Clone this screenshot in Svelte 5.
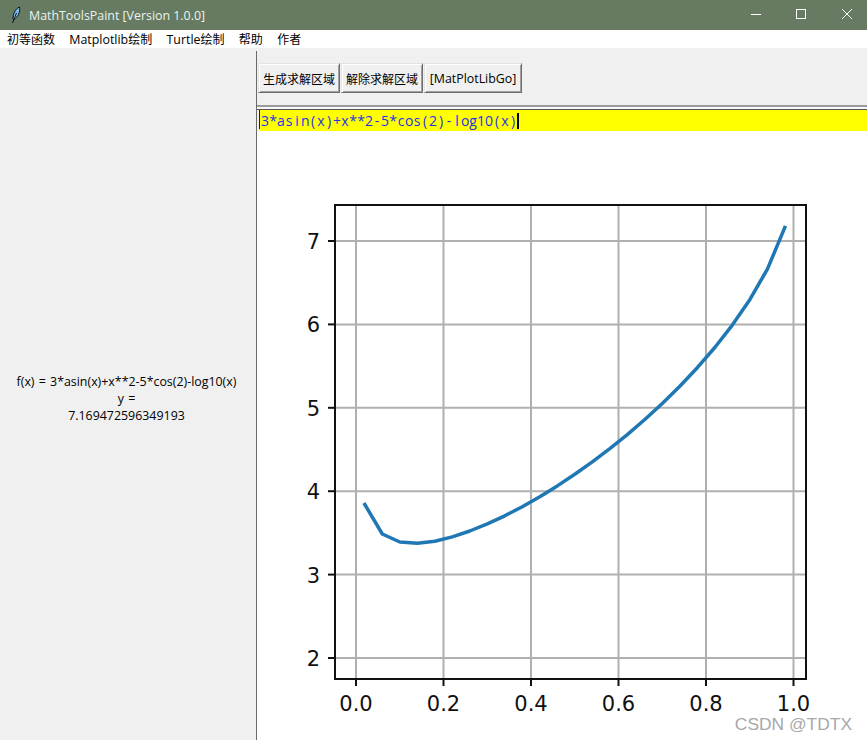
<script>
  const f = (x) => 3 * Math.asin(x) + x * x - 5 * Math.cos(2) - Math.log10(x);
  const px = (x) => 356 + x * 437.5;
  const py = (y) => 658 - (y - 2) * 83.4;
  const points = Array.from({ length: 25 }, (_, i) => {
    const x = 0.02 + i * 0.04;
    return `${px(x).toFixed(1)},${py(f(x)).toFixed(1)}`;
  }).join(' ');
  const xTicks = ['0.0', '0.2', '0.4', '0.6', '0.8', '1.0'];
  const yTicks = [2, 3, 4, 5, 6, 7];
  const menus = [['', '初等函数'], ['Matplotlib', '绘制'], ['Turtle', '绘制'], ['', '帮助'], ['', '作者']];
  const expr = '3*asin(x)+x**2-5*cos(2)-log10(x)';
</script>

<div class="window">
  <header class="titlebar">
    <svg class="feather" viewBox="0 0 10 18" width="10" height="18" aria-hidden="true">
      <path d="M2 13 C2 8 4 3 8.5 1 C9.5 6 7 11 3 13.5 Z" fill="#7db8ea" stroke="#0d1420" stroke-width="1"/>
      <path d="M1.5 17 L5.5 7" stroke="#0d1420" stroke-width="1" fill="none"/>
    </svg>
    <span class="title">MathToolsPaint [Version 1.0.0]</span>
    <div class="controls">
      <svg viewBox="0 0 46 30" width="46" height="30" aria-hidden="true"><path d="M19 14.5 H29" stroke="#fff" fill="none"/></svg>
      <svg viewBox="0 0 46 30" width="46" height="30" aria-hidden="true"><rect x="18.5" y="9.5" width="9" height="9" stroke="#fff" fill="none"/></svg>
      <svg viewBox="0 0 46 30" width="46" height="30" aria-hidden="true"><path d="M18 9 L28 19 M28 9 L18 19" stroke="#fff" fill="none"/></svg>
    </div>
  </header>

  <nav class="menubar">
    {#each menus as [latin, cjk]}
      <span class="menu">{#if latin}<span class="latin">{latin}</span>{/if}{cjk}</span>
    {/each}
  </nav>

  <div class="body">
    <aside class="side">
      <p>f(x) = 3*asin(x)+x**2-5*cos(2)-log10(x)</p>
      <p>y =</p>
      <p>7.169472596349193</p>
    </aside>
    <main class="main">
      <div class="toolbar">
        <button class="btn">生成求解区域</button>
        <button class="btn">解除求解区域</button>
        <button class="btn latin">[MatPlotLibGo]</button>
      </div>
      <div class="sep"></div>
      <div class="entry">
        {#each expr as ch}<span class="ch">{ch}</span>{/each}<i class="caret"></i>
      </div>
      <div class="canvas"></div>
    </main>
  </div>

  <svg class="plot" width="867" height="740" viewBox="0 0 867 740" aria-label="plot">
    <g class="grid">
      {#each xTicks as t, i}<line x1={px(i * 0.2)} x2={px(i * 0.2)} y1="205" y2="679"/>{/each}
      {#each yTicks as t}<line x1="335" x2="806" y1={py(t)} y2={py(t)}/>{/each}
    </g>
    <polyline class="curve" {points}/>
    <rect class="frame" x="335" y="205" width="471" height="474"/>
    <g class="ticks">
      {#each xTicks as t, i}
        <line x1={px(i * 0.2)} x2={px(i * 0.2)} y1="679" y2="686"/>
        <text x={px(i * 0.2)} y="711" text-anchor="middle">{t}</text>
      {/each}
      {#each yTicks as t}
        <line x1="328" x2="335" y1={py(t)} y2={py(t)}/>
        <text x="320" y={py(t) + 8} text-anchor="end">{t}</text>
      {/each}
    </g>
    <text class="mark" x="852" y="730" text-anchor="end">CSDN @TDTX</text>
  </svg>
</div>

<style>
  :global(body) { margin: 0; background: #fff; }
  .window {
    position: relative;
    width: 867px;
    height: 740px;
    overflow: hidden;
    display: flex;
    flex-direction: column;
    font-family: "Noto Sans CJK SC", "Liberation Sans", sans-serif;
    font-size: 12px;
    color: #000;
  }
  .titlebar {
    height: 30px;
    flex: none;
    background: #667b61;
    display: flex;
    align-items: center;
    color: #fff;
  }
  .feather { margin-left: 11px; }
  .title {
    margin-left: 8px;
    font-family: "Open Sans", "Liberation Sans", sans-serif;
    font-size: 12.4px;
    color: #eaf3f0;
  }
  .controls { margin-left: auto; display: flex; margin-right: -3px; }
  .menubar {
    height: 18px;
    flex: none;
    background: #fff;
    display: flex;
    align-items: center;
    padding-left: 7px;
    gap: 14.3px;
    font-family: "Noto Sans CJK SC", sans-serif;
    font-size: 12px;
    line-height: 18px;
  }
  .latin { font-family: "Open Sans", "Noto Sans CJK SC", sans-serif; font-size: 12.4px; }
  .body { flex: 1; display: flex; min-height: 0; background: #f0f0f0; }
  .side {
    width: 256px;
    flex: none;
    box-sizing: border-box;
    padding: 9px 3px 0 0;
    display: flex;
    flex-direction: column;
    align-items: center;
    justify-content: center;
    font-family: "Open Sans", "Liberation Sans", sans-serif;
    font-size: 12.4px;
    word-spacing: 1px;
    line-height: 17px;
  }
  .side p { margin: 0; }
  .main {
    flex: 1;
    display: flex;
    flex-direction: column;
    margin-top: 3px;
    border-left: 1px solid #6b6b6b;
    min-width: 0;
  }
  .toolbar {
    height: 54px;
    flex: none;
    box-sizing: border-box;
    display: flex;
    padding: 12px 0 0 1px;
    gap: 1px;
  }
  .btn {
    height: 30px;
    padding: 0 4px;
    background: #f0f0f0;
    border: 1px solid;
    border-color: #e4e4e4 #6d6d6d #6d6d6d #e4e4e4;
    box-shadow: inset 1px 1px 0 #fff, inset -1px -1px 0 #a0a0a0;
    font-family: "Noto Sans CJK SC", "Open Sans", sans-serif;
    font-size: 12px;
    color: #000;
    white-space: nowrap;
  }
  .btn.latin { font-family: "Open Sans", sans-serif; font-size: 12.4px; width: 98px; padding: 0; }
  .sep {
    height: 5px;
    flex: none;
    box-sizing: border-box;
    border-top: 2px solid #9a9a9a;
    border-bottom: 1px solid #555;
    background: #f8f8f8;
  }
  .entry {
    height: 21px;
    flex: none;
    background: linear-gradient(to right, #f0f0f0 2px, #ff0 2px);
    box-sizing: border-box;
    display: flex;
    align-items: center;
    padding-left: 4px;
    font-family: "Open Sans", "Liberation Sans", sans-serif;
    font-size: 14px;
    color: #1c34e4;
    position: relative;
  }
  .entry::before {
    content: "";
    position: absolute;
    left: 2px;
    top: 0;
    bottom: 2px;
    width: 1px;
    background: #222;
  }
  .ch { display: inline-block; width: 8px; text-align: center; }
  .caret { display: inline-block; width: 2px; height: 16px; background: #000; }
  .canvas { flex: 1; background: #fff; }
  .plot { position: absolute; left: 0; top: 0; pointer-events: none; }
  .grid line { stroke: #b0b0b0; stroke-width: 2; }
  .curve { fill: none; stroke: #1f77b4; stroke-width: 3.5; stroke-linejoin: round; stroke-linecap: square; }
  .frame { fill: none; stroke: #111; stroke-width: 2; }
  .ticks line { stroke: #111; stroke-width: 2; }
  .ticks text { font-family: "DejaVu Sans", sans-serif; font-size: 21px; fill: #111; }
  .mark { font-family: "Liberation Sans", sans-serif; font-size: 17.4px; fill: #a8a8a8; }
</style>
